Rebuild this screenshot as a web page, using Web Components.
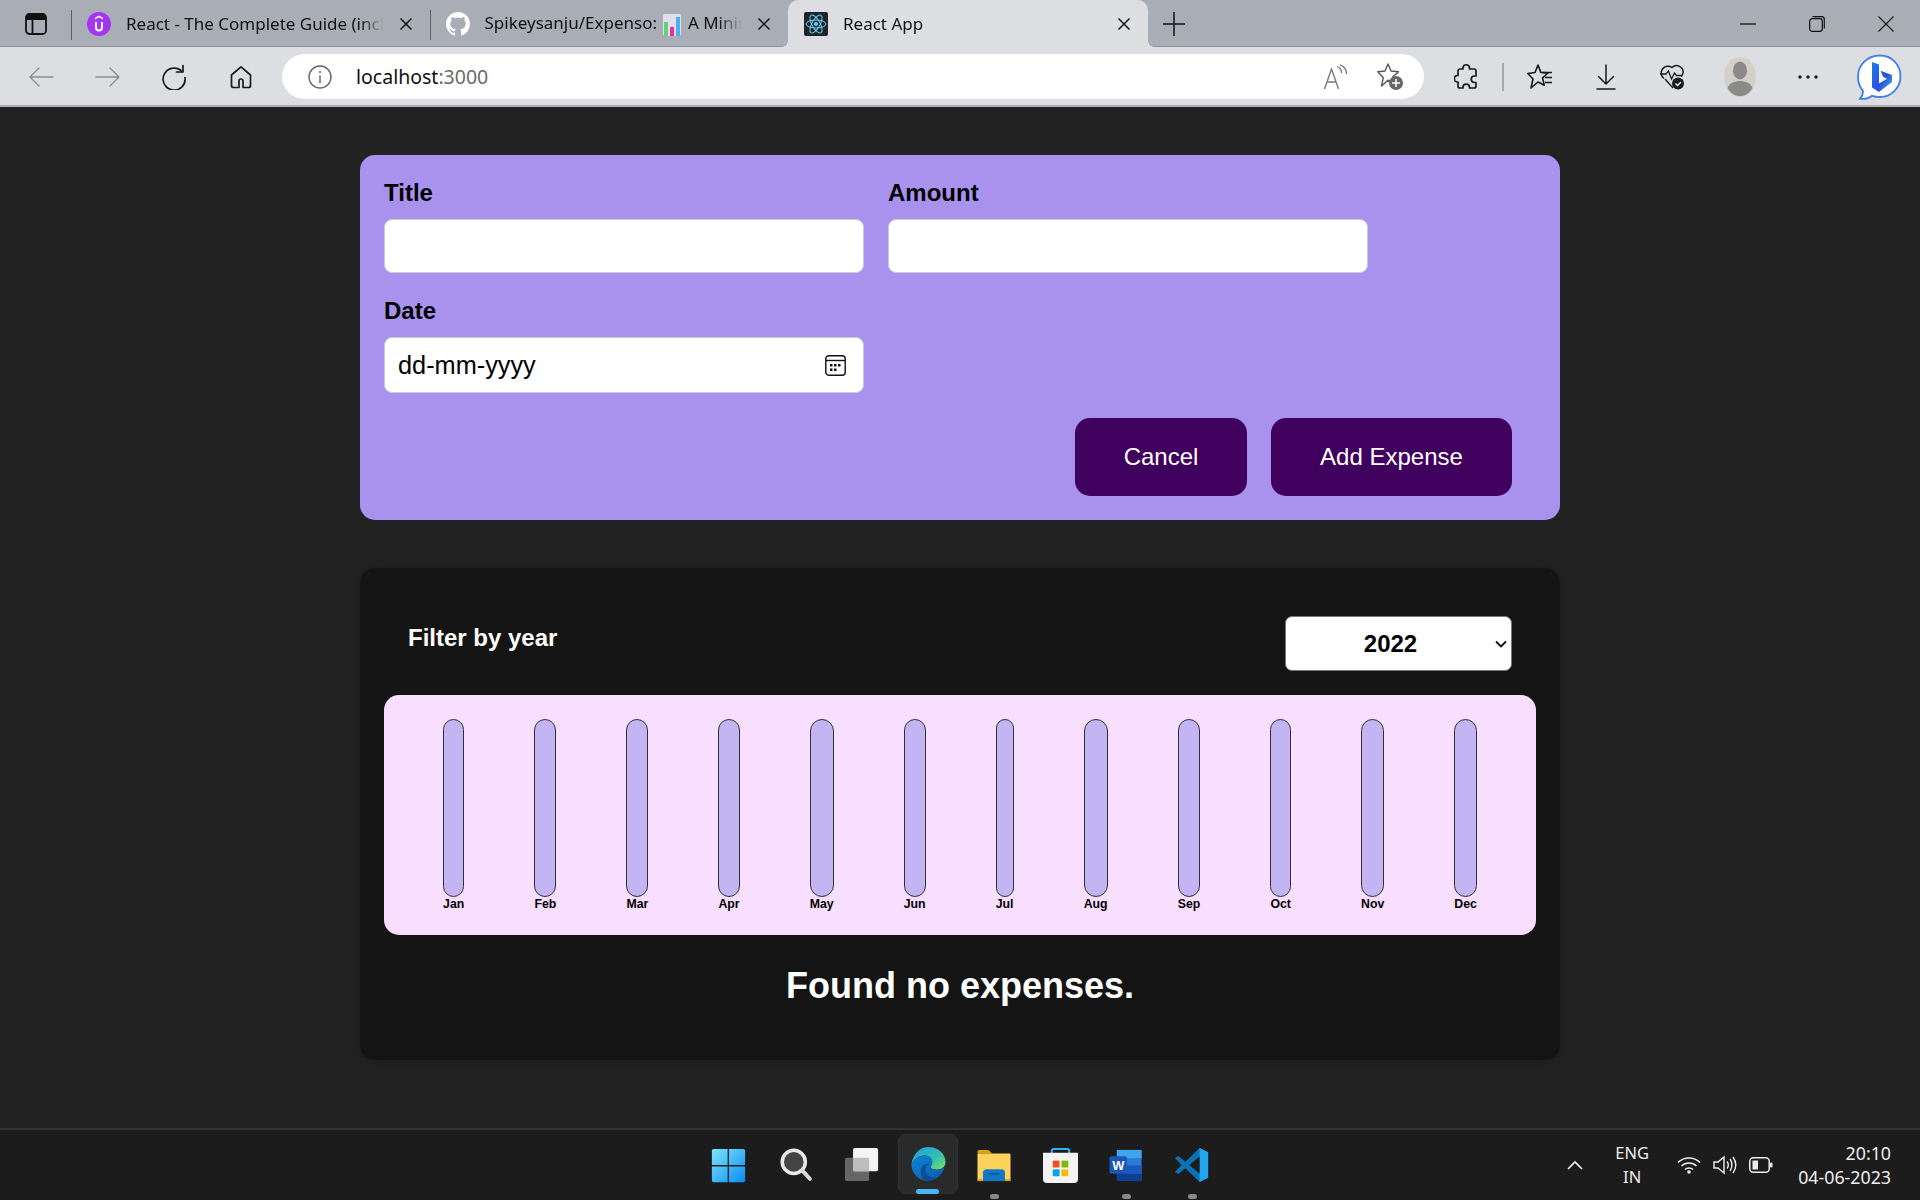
<!DOCTYPE html>
<html lang="en"><head><meta charset="utf-8"><title>React App</title>
<style>html,body{margin:0;padding:0;height:100%;background:#222}body{font-family:"Liberation Sans",Arial,sans-serif}</style></head>
<body>
<win-frame>
  <tab-strip slot="tabs">
    <ui-icon name="sidebar" slot="lead"></ui-icon>
    <browser-tab><ui-icon name="udemy" slot="icon"></ui-icon>React - The Complete Guide (incl</browser-tab>
    <browser-tab sep><ui-icon name="github" slot="icon"></ui-icon>Spikeysanju/Expenso: <ui-icon name="bars" style="margin:0 2px"></ui-icon> A Minimal</browser-tab>
    <browser-tab active><ui-icon name="react" slot="icon"></ui-icon>React App</browser-tab>
  </tab-strip>
  <tool-bar slot="toolbar"></tool-bar>
  <expense-form></expense-form>
  <expense-panel>
    <chart-bar>Jan</chart-bar><chart-bar>Feb</chart-bar><chart-bar>Mar</chart-bar><chart-bar>Apr</chart-bar><chart-bar>May</chart-bar><chart-bar>Jun</chart-bar><chart-bar>Jul</chart-bar><chart-bar>Aug</chart-bar><chart-bar>Sep</chart-bar><chart-bar>Oct</chart-bar><chart-bar>Nov</chart-bar><chart-bar>Dec</chart-bar>
  </expense-panel>
  <task-bar slot="taskbar"></task-bar>
</win-frame>
<script>
const S='fill="none" stroke="currentColor" stroke-linecap="round" stroke-linejoin="round"';
const svg=(w,h,vb,body)=>`<svg width="${w}" height="${h}" viewBox="${vb}" xmlns="http://www.w3.org/2000/svg">${body}</svg>`;
const ICONS={
sidebar:svg(22,22,'0 0 22 22',`<rect x="1" y="1" width="20" height="20" rx="3.5" fill="none" stroke="#111" stroke-width="1.8"/><path d="M1 4.5A3.5 3.5 0 0 1 4.500 1h13A3.500 3.500 0 0 1 21 4.500V7H1z" fill="#111"/><path d="M7.500 7v14" stroke="#111" stroke-width="1.800"/>`),
udemy:svg(24,24,'0 0 24 24',`<circle cx="12" cy="12" r="12" fill="#a435f0"/><path d="M8 10v5.500a4 4 0 0 0 8 0V10h-2v5.500a2 2 0 0 1-4 0V10z" fill="#fff"/><path d="M12 3.500l4 2.300v1.700l-4-2.200-4 2.200V5.800z" fill="#fff"/>`),
github:svg(24,24,'0 0 16 16',`<path fill="#fff" d="M8 0C3.580 0 0 3.580 0 8c0 3.540 2.290 6.530 5.470 7.590.4.070.55-.17.55-.38 0-.19-.01-.82-.01-1.490-2.010.37-2.530-.49-2.690-.94-.09-.23-.48-.94-.82-1.130-.28-.15-.68-.52-.01-.53.63-.01 1.080.58 1.230.82.72 1.210 1.870.87 2.330.66.07-.52.28-.87.51-1.070-1.780-.2-3.640-.89-3.640-3.950 0-.87.31-1.590.82-2.150-.08-.2-.36-1.020.08-2.120 0 0 .67-.21 2.200.82.64-.18 1.320-.27 2-.27.68 0 1.360.09 2 .27 1.530-1.040 2.200-.82 2.200-.82.44 1.100.16 1.920.08 2.120.51.56.82 1.270.82 2.150 0 3.070-1.870 3.750-3.650 3.950.29.25.54.73.54 1.480 0 1.070-.01 1.930-.01 2.200 0 .21.15.46.55.38A8.013 8.013 0 0 0 16 8c0-4.420-3.580-8-8-8z"/>`),
bars:svg(18,22,'0 0 18 22',`<rect width="18" height="22" rx="2" fill="#e4dcef"/><rect x="1" y="8" width="4" height="14" fill="#5ed47a"/><rect x="7" y="13" width="4" height="9" fill="#ec2f8f"/><rect x="13" y="3" width="4" height="19" fill="#4cb0f0"/>`),
react:svg(24,24,'0 0 24 24',`<rect width="24" height="24" rx="2" fill="#20232a"/><g fill="none" stroke="#61dafb" stroke-width="1"><ellipse cx="12" cy="12" rx="10" ry="4"/><ellipse cx="12" cy="12" rx="10" ry="4" transform="rotate(60 12 12)"/><ellipse cx="12" cy="12" rx="10" ry="4" transform="rotate(120 12 12)"/></g><circle cx="12" cy="12" r="2" fill="#61dafb"/>`),
x:svg(14,14,'0 0 14 14',`<path d="M1.500 1.500l11 11M12.500 1.500l-11 11" stroke="#111" stroke-width="1.500" fill="none"/>`),
plus:svg(22,26,'0 0 22 26',`<path d="M11 1v24M0 13h22" stroke="#111" stroke-width="1.500" fill="none"/>`),
min:svg(16,2,'0 0 16 2',`<path d="M0 1h16" stroke="#111" stroke-width="1.300"/>`),
restore:svg(16,16,'0 0 16 16',`<rect x=".7" y="2.700" width="12.600" height="12.600" rx="2.500" fill="none" stroke="#111" stroke-width="1.200"/><path d="M3.500.7h9a2.800 2.800 0 0 1 2.800 2.800v9" fill="none" stroke="#111" stroke-width="1.200"/>`),
winx:svg(16,16,'0 0 16 16',`<path d="M.5.500l15 15M15.500.500l-15 15" stroke="#111" stroke-width="1.100" fill="none"/>`),
back:svg(26,22,'0 0 26 22',`<path d="M25 11H2M11 2l-9 9 9 9" ${S} stroke-width="1.300" style="color:#8a8c90"/>`),
fwd:svg(26,22,'0 0 26 22',`<path d="M1 11h23M15 2l9 9-9 9" ${S} stroke-width="1.300" style="color:#8a8c90"/>`),
reload:svg(26,26,'0 0 26 26',`<path d="M21.500 8A11 11 0 1 0 24 13.500M22 1.500V8h-6.500" ${S} stroke-width="1.700" style="color:#1a1a1a"/>`),
home:svg(24,24,'0 0 24 24',`<path d="M10 22.500H4.500a2 2 0 0 1-2-2V10L12 1.800 21.500 10v10.500a2 2 0 0 1-2 2H14V16a2 2 0 0 0-4 0z" ${S} stroke-width="1.700" style="color:#1a1a1a"/>`),
info:svg(24,24,'0 0 24 24',`<circle cx="12" cy="12" r="11" fill="none" stroke="#666" stroke-width="1.400"/><path d="M12 10.500V18" stroke="#666" stroke-width="1.500"/><circle cx="12" cy="7" r="1.100" fill="#666"/>`),
aloud:svg(26,26,'0 0 26 26',`<path d="M1.500 25L8.500 5l7 20M4 18h9" fill="none" stroke="#777" stroke-width="1.400"/><path d="M14 2.500c3 1 4.500 3.500 4.500 6.500M17 .8c4.500 1.500 6.500 5 6.500 9.200" fill="none" stroke="#777" stroke-width="1.300"/>`),
favadd:svg(28,30,'0 0 28 30',`<path d="M11 2l3 7 7.500.7-5.600 5 1.700 7.300L11 18.200 4.500 24l1.800-8.300L.8 9.700 8 9z" fill="none" stroke="#555" stroke-width="1.400" stroke-linejoin="round"/><circle cx="19" cy="21" r="7" fill="#666"/><path d="M19 17v8M15 21h8" stroke="#fff" stroke-width="1.500"/>`),
ext:svg(24,28,'0 0 24 28',`<path d="M9 4.500a3.300 3.300 0 0 1 6.500 0V6H20a2 2 0 0 1 2 2v5h-1.500a3.200 3.200 0 0 0 0 6.500H22V23a2 2 0 0 1-2 2h-4.500v-.7a3.200 3.200 0 0 0-6.500 0v.7H6a2 2 0 0 1-2-2v-4H3a3.300 3.300 0 0 1 0-6.500h1V8a2 2 0 0 1 2-2h3z" ${S} stroke-width="1.700" style="color:#1a1a1a"/>`),
favs:svg(26,28,'0 0 26 28',`<path d="M11 2l2.800 7.400L21 10l-5.500 4.800 1.800 7.500L11 19 4 25l2-9L.8 10.500 8 9.500z" ${S} stroke-width="1.600" style="color:#1a1a1a"/><path d="M16 9.500h9M18 14.500h7M18 19.500h7" stroke="#1a1a1a" stroke-width="1.500"/>`),
dl:svg(20,26,'0 0 20 26',`<path d="M10 1v19M2.500 12.500L10 20l7.500-7.500M1 25h18" ${S} stroke-width="1.500" style="color:#1a1a1a"/>`),
health:svg(26,26,'0 0 26 26',`<path d="M5 14.500A6.500 6.500 0 0 1 13 3.500a6.500 6.500 0 0 1 11 5.500c-.2 1.500-1 2.700-2 3.500" fill="none" stroke="#1a1a1a" stroke-width="1.500"/><path d="M1 10h6l2.500-3 3 8 3-6 2 2.500h6M6 15l8 9" fill="none" stroke="#1a1a1a" stroke-width="1.300"/><circle cx="19" cy="19.500" r="6" fill="#1a1a1a"/><path d="M16.500 19.500l2 2 3.500-3.500" fill="none" stroke="#fff" stroke-width="1.300"/>`),
profile:svg(32,40,'0 0 32 40',`<ellipse cx="16" cy="20" rx="16" ry="20" fill="#d2d0c9"/><ellipse cx="16" cy="13.500" rx="7" ry="9" fill="#8a8a86"/><path d="M3.500 31c2-5 7-7 12.500-7s10.500 2 12.500 7c-3 5.500-7.500 8-12.500 8S6.500 36.500 3.500 31z" fill="#8a8a86"/>`),
more:svg(20,4,'0 0 20 4',`<g fill="#1a1a1a"><circle cx="2" cy="2" r="1.700"/><circle cx="10" cy="2" r="1.700"/><circle cx="18" cy="2" r="1.700"/></g>`),
bing:svg(46,46,'0 0 46 46',`<defs><linearGradient id="bb" x1="0" y1="0" x2="1" y2="1"><stop offset="0" stop-color="#1c7be8"/><stop offset=".6" stop-color="#2b50e0"/><stop offset="1" stop-color="#38c6e8"/></linearGradient></defs><path d="M24 1.500C36 1.500 44.500 11 44.500 22.500S35 43 24 43c-3 0-5.500-.3-8-1.200-3 2.500-7 3.500-12 3 2-2 3-4.500 3-8C3.500 33 2 28 2 22.500 2 11 11.500 1.500 24 1.500z" fill="#fff" stroke="#3f7fe8" stroke-width="1.800"/><path d="M16 8l7 2.500v19l8-4.700-4-2-2.500-6 11.500 4.200v7L23 38l-7-4.500z" fill="url(#bb)"/>`),
win:svg(35,35,'0 0 40 40',`<defs><linearGradient id="w" x1="0" y1="0" x2="1" y2="1"><stop offset="0" stop-color="#7ce6ff"/><stop offset="1" stop-color="#0a8cf0"/></linearGradient></defs><path fill="url(#w)" d="M1 3a2 2 0 0 1 2-2h16v18.500H1zM20.500 1H37a2 2 0 0 1 2 2v16.500H20.500zM1 21h18v18H3a2 2 0 0 1-2-2zM20.500 21H39v16a2 2 0 0 1-2 2H20.500z"/>`),
search:svg(32,34,'0 0 36 38',`<circle cx="15.500" cy="15.500" r="13" fill="#444" stroke="#e8e8e8" stroke-width="4"/><path d="M25 25l8.500 9.500" stroke="#d8d8d8" stroke-width="4.500" stroke-linecap="round"/>`),
view:svg(36,34,'0 0 38 38',`<rect x="0" y="11" width="27" height="26" rx="2" fill="#666"/><rect x="9" y="0" width="28" height="26" rx="2" fill="#f4f4f4"/><rect x="9" y="11" width="18" height="15" fill="#bdbdbd"/>`),
edge:svg(37,36,'0 0 38 38',`<defs><linearGradient id="e1" x1="0" y1="0" x2="1" y2="1"><stop offset="0" stop-color="#1b9de2"/><stop offset=".6" stop-color="#35c1b0"/><stop offset="1" stop-color="#7be35a"/></linearGradient><linearGradient id="e2" x1="0" y1="0" x2="1" y2="1"><stop offset="0" stop-color="#0c84d8"/><stop offset="1" stop-color="#0d5aa8"/></linearGradient></defs><path d="M19 1c10 0 18 7 18 16 0 5-4 8-9 8-4 0-7-1-7-3 0-1 2-1.500 2-5 0-4.500-4-7-8-7-6 0-11 3.500-14 9C3 9 9 1 19 1z" fill="url(#e1)"/><path d="M1 19c3-5 8-9 14-9 4 0 8 2.500 8 7 0 3.500-2 4-2 5 0 2 3 3 7 3 3 0 6-1 8-3-2 8-9 15-18 15C9 37 1 29 1 19z" fill="url(#e2)"/><path d="M15 37c-4-3-5-8-4-12 1-5 6-7 9-6-3 1-5 4-4 8 1 4 6 7 12 6-3 3-8 5-13 4z" fill="#0b4f96"/>`),
folder:svg(36,33,'0 0 36 36',`<path d="M0 3a2 2 0 0 1 2-2h10l4 4H0z" fill="#d9a404"/><rect y="5" width="36" height="30" rx="1" fill="#fdd35c"/><rect y="33" width="36" height="2" fill="#d9a404"/><path d="M6 26a4 4 0 0 1 4-4h16a4 4 0 0 1 4 4v9H6z" fill="#0f78c8"/><path d="M12 27h12" stroke="#094f8c" stroke-width="1.500"/>`),
store:svg(35,35,'0 0 36 36',`<path d="M9 6V3a2 2 0 0 1 2-2h14a2 2 0 0 1 2 2v3" fill="none" stroke="#2fb4ee" stroke-width="2"/><path d="M0 5h36v27a4 4 0 0 1-4 4H4a4 4 0 0 1-4-4z" fill="#f3f3f3"/><rect x="10" y="13" width="7" height="7" fill="#f25022"/><rect x="19" y="13" width="7" height="7" fill="#7fba00"/><rect x="10" y="22" width="7" height="7" fill="#00a4ef"/><rect x="19" y="22" width="7" height="7" fill="#ffb900"/>`),
word:svg(36,33,'0 0 36 36',`<rect x="8" y="1" width="27" height="34" rx="2" fill="#2b7cd3"/><rect x="8" y="1" width="27" height="9" fill="#41a5ee"/><rect x="8" y="18" width="27" height="9" fill="#185abd"/><rect x="8" y="27" width="27" height="8" fill="#103f91"/><rect y="8" width="19" height="19" rx="2" fill="#1a56b5"/><text x="9.500" y="23" text-anchor="middle" font-family="Liberation Sans" font-weight="700" font-size="14" fill="#fff">W</text>`),
vscode:svg(36,36,'0 0 36 38',`<path d="M26 1l9 4.500v27L26 37 11 22.500 3.500 28.500 0 26.500 7 19 0 11.500l3.500-2 7.500 6z" fill="#0a73b8"/><path d="M26 1l9 4.500v27L26 37z" fill="#23a5ee"/><path d="M26 10L15 19l11 9z" fill="#1c1c1c"/>`),
chev:svg(16,10,'0 0 16 10',`<path d="M1 9l7-7 7 7" fill="none" stroke="#eee" stroke-width="1.700"/>`),
wifi:svg(24,18,'0 0 24 18',`<g fill="none" stroke="#eee" stroke-width="1.500"><path d="M1 6.500c6-6 16-6 22 0M4.500 10c4-4 11-4 15 0M8 13.500c2-2 6-2 8 0"/></g><circle cx="12" cy="16" r="1.800" fill="#eee"/>`),
vol:svg(24,20,'0 0 24 20',`<path d="M1 7h4l6-5v16l-6-5H1z" fill="none" stroke="#eee" stroke-width="1.400"/><path d="M14 6.500c1.500 2 1.500 5 0 7M17 4c2.500 3.500 2.500 8.500 0 12M20 2c3.500 5 3.500 11 0 16" fill="none" stroke="#eee" stroke-width="1.400"/>`),
batt:svg(24,16,'0 0 24 16',`<rect x=".8" y=".8" width="19.400" height="14.400" rx="3.500" fill="none" stroke="#eee" stroke-width="1.500"/><rect x="3.500" y="3.500" width="5.500" height="9" fill="#eee"/><rect x="21" y="5.500" width="2.500" height="5" rx="1" fill="#eee"/>`),
cal:svg(21,21,'0 0 21 21',`<rect x=".8" y=".8" width="19.400" height="19.400" rx="3" fill="none" stroke="#111" stroke-width="1.400"/><path d="M1 5.500h19" stroke="#111" stroke-width="1.400"/><g fill="#111"><rect x="5" y="9" width="2.500" height="2.500"/><rect x="9" y="9" width="2.500" height="2.500"/><rect x="13" y="9" width="2.500" height="2.500"/><rect x="5" y="13.500" width="2.500" height="2.500"/><rect x="9" y="13.500" width="2.500" height="2.500"/></g>`),
selarrow:svg(12,8,'0 0 12 8',`<path d="M1 1.500l5 5 5-5" fill="none" stroke="#111" stroke-width="1.800"/>`)
};
function def(name,css,html,extra){
  customElements.define(name,class extends HTMLElement{
    constructor(){super();this.attachShadow({mode:'open'}).innerHTML=`<style>${css}</style>${typeof html==='function'?html(this):html}`}
    connectedCallback(){if(extra)extra(this)}
  });
}
const UI='"Noto Sans","Open Sans",sans-serif';
def('ui-icon',':host{display:inline-flex;vertical-align:middle;align-items:center;justify-content:center}svg{display:block}','',el=>{el.shadowRoot.innerHTML+=ICONS[el.getAttribute('name')]||''});

def('win-frame',`:host{display:flex;flex-direction:column;width:1920px;height:1200px;overflow:hidden;background:#222}
main{flex:1;display:flex;flex-direction:column;align-items:center;gap:48px;padding-top:48px;min-height:0}`,
`<slot name="tabs"></slot><slot name="toolbar"></slot><main><slot></slot></main><slot name="taskbar"></slot>`);

def('tab-strip',`:host{display:flex;height:47px;background:#a9adb5;align-items:stretch;box-shadow:inset 0 -1px 0 #8f9298}
.lead{width:71px;display:flex;align-items:center;justify-content:center;box-sizing:border-box}
.tabs{display:flex}
.add{width:52px;display:flex;align-items:center;justify-content:center}
.grow{flex:1}
.ctl{display:flex;align-items:center}
.ctl span{display:flex;width:69px;justify-content:center}`,
`<div class="lead"><slot name="lead"></slot></div><div class="tabs"><slot></slot></div>
<div class="add"><ui-icon name="plus"></ui-icon></div><div class="grow"></div>
<div class="ctl"><span><ui-icon name="min"></ui-icon></span><span><ui-icon name="restore"></ui-icon></span><span><ui-icon name="winx"></ui-icon></span></div>`);

def('browser-tab',`:host{display:flex;align-items:center;width:358.500px;box-sizing:border-box;padding:0 16px;gap:15px;font:17px ${UI};color:#111;position:relative}
:host::before{content:"";position:absolute;left:0;top:10px;height:30px;width:1px;background:#5c5f64}
:host([active]){width:360px;background:#dcdee2;border-radius:10px 10px 0 0;height:47px}
:host([active])::before,:host([active])::after{content:"";position:absolute;bottom:0;top:auto;width:6px;height:6px;background:none}
:host([active])::before{left:-6px;background:radial-gradient(circle at 0 0,transparent 5.500px,#dcdee2 6px)}
:host([active])::after{right:-6px;background:radial-gradient(circle at 100% 0,transparent 5.500px,#dcdee2 6px)}
.t{flex:1;min-width:0;margin-right:12px;white-space:nowrap;overflow:hidden;-webkit-mask-image:linear-gradient(90deg,#000 calc(100% - 24px),transparent);mask-image:linear-gradient(90deg,#000 calc(100% - 24px),transparent)}
.c{display:flex;margin-left:-12px;margin-right:1px}`,
`<slot name="icon"></slot><div class="t"><slot></slot></div><span class="c"><ui-icon name="x"></ui-icon></span>`);

def('tool-bar',`:host{display:flex;height:60px;background:#dcdee2;align-items:center;box-sizing:border-box;padding-left:8px;padding-top:1px;border-bottom:2px solid #b0b1b4}
.b{display:flex;width:66.500px;justify-content:center;align-items:center}
.bar{width:1142px;height:45px;margin-left:8px;margin-right:9px;background:#fff;border-radius:23px;display:flex;align-items:center;box-sizing:border-box;padding-left:26px;font:19.500px ${UI};color:#111}
.bar .u{margin-left:24px;flex:1}.bar .u span{color:#6a6a6a}
.bar .r{display:flex;width:55px;justify-content:center}
.bar .end{margin-right:6px}
.sep{width:1.500px;height:28px;background:#a8a9ac;margin:0 3px}
.m{margin-left:2px}`,
`<span class="b"><ui-icon name="back"></ui-icon></span><span class="b"><ui-icon name="fwd"></ui-icon></span><span class="b"><ui-icon name="reload"></ui-icon></span><span class="b"><ui-icon name="home"></ui-icon></span>
<div class="bar"><ui-icon name="info"></ui-icon><div class="u">localhost<span>:3000</span></div><div class="r"><ui-icon name="aloud"></ui-icon></div><div class="r end"><ui-icon name="favadd"></ui-icon></div></div>
<span class="b" style="width:66px"><ui-icon name="ext"></ui-icon></span><span class="sep"></span>
<span class="b" style="width:66px"><ui-icon name="favs"></ui-icon></span><span class="b" style="width:66px"><ui-icon name="dl"></ui-icon></span><span class="b"><ui-icon name="health"></ui-icon></span><span class="b m" style="width:66px"><ui-icon name="profile"></ui-icon></span><span class="b m" style="width:66px"><ui-icon name="more"></ui-icon></span><span class="b" style="width:66px;margin-left:5px"><ui-icon name="bing"></ui-icon></span>`);

def('form-field',`:host{display:block;width:480px}
label{display:block;font:700 24px "Liberation Sans",Arial,sans-serif;color:#000;margin-bottom:12.500px;line-height:27.500px}
.i{display:flex;align-items:center;justify-content:space-between;box-sizing:border-box;width:100%;height:54px;background:#fff;border:1px solid #ccc;border-radius:8px;padding:0 13px;font:25.300px "Liberation Sans",Arial,sans-serif;color:#000}
:host([tall]) .i{height:56px;padding-right:17px}
input{all:unset;flex:1;min-width:0}`,
el=>`<label><slot></slot></label><div class="i">${el.hasAttribute('date')?'<span>dd-mm-yyyy</span><ui-icon name="cal"></ui-icon>':'<input type="text" aria-label="field">'}</div>`);

def('expense-form',`:host{display:block;width:1200px;box-sizing:border-box;height:365px;background:#a892ee;border-radius:15px;padding:24px 24px;flex:none}
.g{display:grid;grid-template-columns:480px 480px;column-gap:24px;row-gap:24px}
.a{display:flex;justify-content:flex-end;gap:24px;margin-top:25px;padding-right:24px}
button{all:unset;box-sizing:border-box;height:78px;display:flex;align-items:center;justify-content:center;background:#40005d;color:#fff;border-radius:15px;font:24px "Liberation Sans",Arial,sans-serif}`,
`<div class="g"><form-field>Title</form-field><form-field>Amount</form-field><form-field date tall>Date</form-field></div>
<div class="a"><button style="width:172px">Cancel</button><button style="width:241px">Add Expense</button></div>`);

def('expense-panel',`:host{display:block;width:1200px;height:492px;box-sizing:border-box;background:#141414;border-radius:15px;padding:48px 24px 0;flex:none;box-shadow:0 1px 8px rgba(0,0,0,.25)}
.f{display:flex;justify-content:space-between;align-items:flex-start;padding:0 24px;height:55px;margin-bottom:24px}
.l{font:700 24px "Liberation Sans",Arial,sans-serif;color:#fff;line-height:27.500px;margin-top:8px}
.s{box-sizing:border-box;width:227px;height:55px;background:#fff;border:1px solid #777;border-radius:7px;display:flex;align-items:center;font:700 24px "Liberation Sans",Arial,sans-serif;color:#000}
.s span{flex:1;text-align:center}
.s ui-icon{margin-right:4px}
.c{height:240px;box-sizing:border-box;background:#f8dfff;border-radius:15px;padding:24px 24px;display:flex;justify-content:space-around}
h2{margin:0;text-align:center;color:#fff;font:700 36px "Liberation Sans",Arial,sans-serif;margin-top:30px;line-height:42px}`,
`<div class="f"><div class="l">Filter by year</div><div class="s"><span>2022</span><ui-icon name="selarrow"></ui-icon></div></div>
<div class="c"><slot></slot></div><h2>Found no expenses.</h2>`);

def('chart-bar',`:host{display:flex;flex-direction:column;height:100%}
.b{flex:1;box-sizing:border-box;border:1px solid #313131;background:#c3b4f3;border-radius:15px}
.l{font:700 12.300px/14px "Liberation Sans",Arial,sans-serif;color:#000;text-align:center}`,
`<div class="b"></div><div class="l"><slot></slot></div>`);

def('task-bar',`:host{display:flex;align-items:center;height:72px;box-sizing:border-box;background:#1c1c1c;border-top:2px solid #333;position:relative;color:#eee;font:16.500px ${UI}}
.c{position:absolute;left:695px;top:0;display:flex;height:70px}
.i{width:66px;display:flex;align-items:center;justify-content:center;position:relative;height:70px}
.i.first{width:68px;padding-right:2px;box-sizing:border-box}
.i.a{background:#2a2a2a;border-radius:7px;height:60px;margin-top:4px;width:60px;margin-left:3px;margin-right:3px;border:1px solid #303030;box-sizing:border-box}
.d{position:absolute;bottom:1px;left:50%;width:9px;height:5px;margin-left:-4px;background:#8a8a8a;border-radius:3px}
.a .d{width:23px;margin-left:-12px;background:#47b6f5;bottom:-1px}
.t{margin-left:auto;display:flex;align-items:center;height:70px}
.up{margin-right:24px}
.lang{text-align:center;line-height:24px;width:50px;margin-right:14px}
.sys{width:36px;display:flex;justify-content:center}
.time{text-align:right;line-height:24px;margin-left:19px;margin-right:29px;font-size:17.800px}`,
`<div class="c">
<div class="i first"><ui-icon name="win"></ui-icon></div><div class="i"><ui-icon name="search"></ui-icon></div><div class="i"><ui-icon name="view"></ui-icon></div>
<div class="i a"><ui-icon name="edge"></ui-icon><span class="d"></span></div>
<div class="i"><ui-icon name="folder"></ui-icon><span class="d"></span></div><div class="i"><ui-icon name="store"></ui-icon></div>
<div class="i"><ui-icon name="word"></ui-icon><span class="d"></span></div><div class="i"><ui-icon name="vscode"></ui-icon><span class="d"></span></div></div>
<div class="t"><ui-icon class="up" name="chev"></ui-icon><div class="lang">ENG<br>IN</div><span class="sys"><ui-icon name="wifi"></ui-icon></span><span class="sys"><ui-icon name="vol"></ui-icon></span><span class="sys"><ui-icon name="batt"></ui-icon></span><div class="time">20:10<br>04-06-2023</div></div>`);
</script>
</body></html>
